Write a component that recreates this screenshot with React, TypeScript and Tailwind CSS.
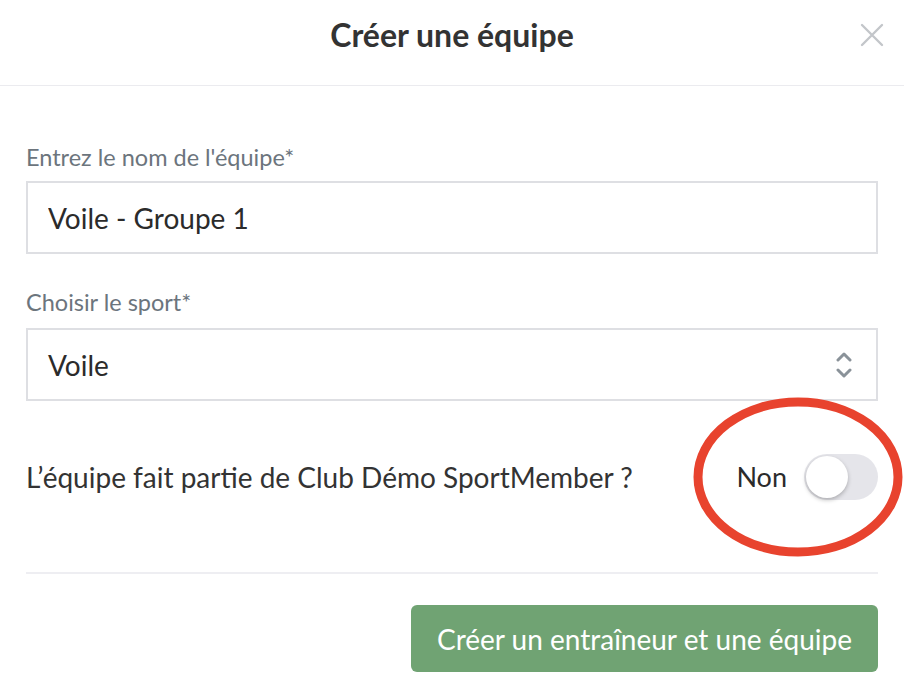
import React, { useState } from 'react';

const font = { fontFamily: 'Lato, "Open Sans", sans-serif' };

function Chevrons() {
  return (
    <svg width="16" height="30" viewBox="0 0 16 30" fill="none" stroke="#8a9299" strokeWidth="3" strokeLinecap="round" strokeLinejoin="round">
      <path d="M2 10 L8 4 L14 10" />
      <path d="M2 20 L8 26 L14 20" />
    </svg>
  );
}

export default function App() {
  const [name, setName] = useState('Voile - Groupe 1');
  const [member, setMember] = useState(false);

  return (
    <div className="relative h-[700px] w-[904px] overflow-hidden bg-white text-[#333333]" style={font}>
      {/* header */}
      <div className="relative flex h-[86px] items-start justify-center border-b border-[#ebebef] pt-[16px]">
        <h1 className="text-[32px] leading-[38px] font-bold text-[#333333]">Créer une équipe</h1>
        <button className="absolute right-[16px] top-[19px] p-1 text-[#c3c6ca]">
          <svg width="24" height="24" viewBox="0 0 24 24" fill="none" stroke="currentColor" strokeWidth="2.4" strokeLinecap="round">
            <path d="M2 2 L22 22 M22 2 L2 22" />
          </svg>
        </button>
      </div>

      <div className="px-[26px] pt-[57px]">
        <label className="block text-[23.5px] leading-[28px] text-[#6c757d]">Entrez le nom de l'équipe*</label>
        <input
          value={name}
          onChange={(e) => setName(e.target.value)}
          className="mt-[10px] block h-[73px] w-full border-2 border-[#dedfe3] px-[20px] text-[28px] text-[#2b2b2b] outline-none"
          style={font}
        />

        <label className="mt-[34px] block text-[23.5px] leading-[28px] text-[#6c757d]">Choisir le sport*</label>
        <div className="mt-[12px] flex h-[73px] w-full items-center justify-between border-2 border-[#dedfe3] pl-[20px] pr-[24px]">
          <span className="text-[28px] text-[#2b2b2b]">Voile</span>
          <Chevrons />
        </div>

        <div className="mt-[53px] flex h-[46px] items-center justify-between">
          <span className="text-[28px] text-[#333333]">L’équipe fait partie de Club Démo SportMember ?</span>
          <div className="flex items-center gap-[17px]">
            <span className="text-[27px] text-[#2b2b2b]">{member ? 'Oui' : 'Non'}</span>
            <button
              onClick={() => setMember(!member)}
              className={`flex h-[46px] w-[74px] items-center rounded-full px-[2px] ${member ? 'justify-end bg-[#70a373]' : 'justify-start bg-[#e5e5ea]'}`}
            >
              <span className="block h-[42px] w-[42px] rounded-full bg-white shadow-[0_2px_4px_rgba(0,0,0,0.25)]" />
            </button>
          </div>
        </div>

        <div className="mt-[72px] border-t-2 border-[#eeeef2]" />

        <div className="flex justify-end pt-[31px]">
          <button className="h-[67px] rounded-[6px] bg-[#70a373] px-[26px] text-[28px] text-white">
            Créer un entraîneur et une équipe
          </button>
        </div>
      </div>

      {/* annotation ellipse */}
      <svg className="pointer-events-none absolute left-0 top-0" width="904" height="700">
        <ellipse cx="798" cy="477" rx="100" ry="75" fill="none" stroke="#e8432e" strokeWidth="9" />
      </svg>
    </div>
  );
}
